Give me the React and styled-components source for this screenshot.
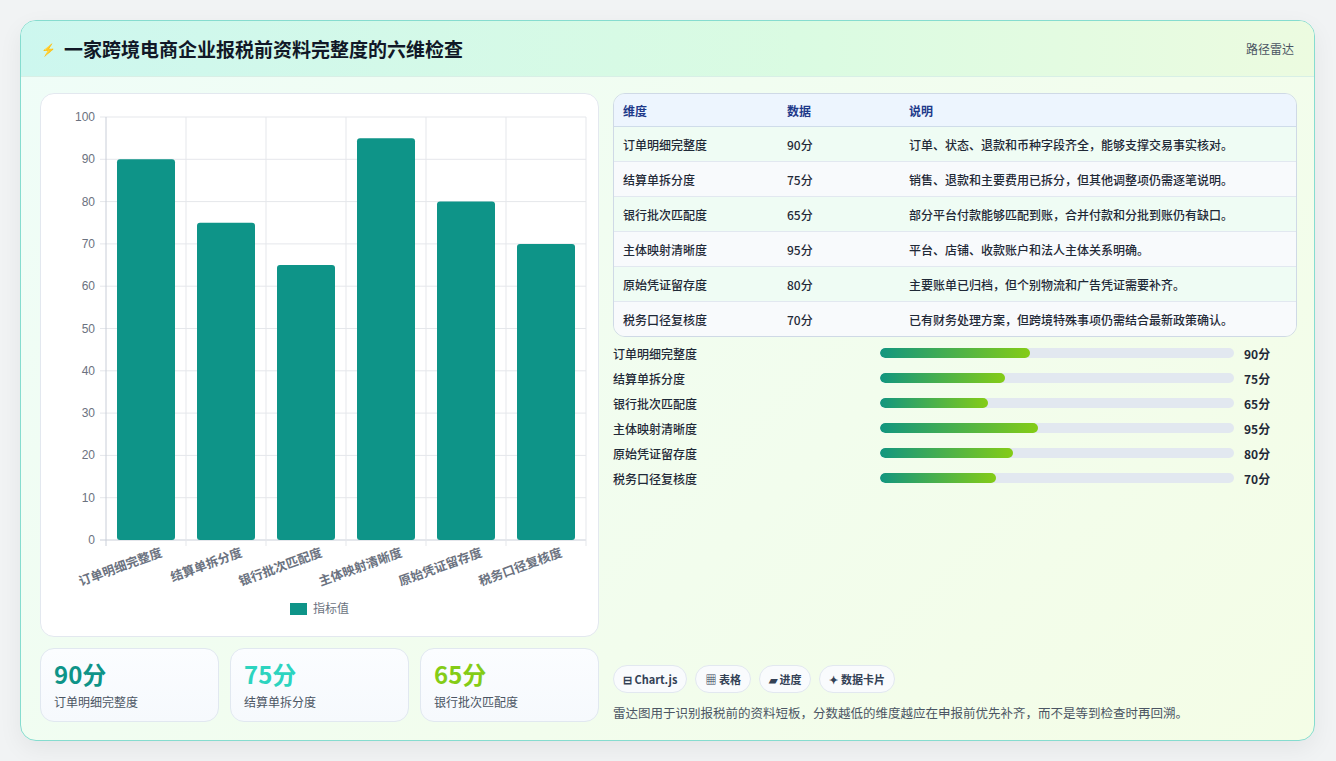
import React from "react";
import styled, { createGlobalStyle } from "styled-components";

const Global = createGlobalStyle`
  body { margin: 0; background: #f1f3f4; font-family: "Noto Sans CJK SC", "Noto Sans", sans-serif; }
`;

const Page = styled.div`
  padding: 20px 21px 20px 20px;
  height: 761px;
  box-sizing: border-box;
`;

const Shell = styled.div`
  height: 721px;
  box-sizing: border-box;
  border: 1px solid #86dccf;
  border-radius: 16px;
  overflow: hidden;
  background: linear-gradient(135deg, #effdf8 0%, #f4fde6 100%);
  box-shadow: 0 8px 24px rgba(0, 0, 0, 0.06);
  display: flex;
  flex-direction: column;
`;

const Header = styled.div`
  height: 55px;
  flex: none;
  display: flex;
  align-items: center;
  justify-content: space-between;
  padding: 0 20px;
  background: linear-gradient(90deg, #cdf7ef 0%, #dafbe2 60%, #ecfbe0 100%);
  border-bottom: 1px solid #d8efe6;
`;

const Title = styled.h1`
  margin: 0;
  font-size: 19px;
  font-weight: 700;
  color: #111827;
  display: flex;
  align-items: center;
  gap: 8px;
`;

const Bolt = styled.span`
  color: #3b82f6;
  font-size: 12px;
`;

const HeaderLink = styled.span`
  font-size: 12px;
  color: #4b5563;
`;

const Body = styled.div`
  flex: 1;
  display: grid;
  grid-template-columns: 559px 684px;
  gap: 14px;
  padding: 16px 19px 18px 19px;
`;

const Col = styled.div`
  display: flex;
  flex-direction: column;
  gap: 11px;
`;

const ChartCard = styled.div`
  background: #fff;
  border: 1px solid #e3e8ef;
  border-radius: 14px;
  height: 544px;
  box-sizing: border-box;
`;

const Stats = styled.div`
  display: grid;
  grid-template-columns: repeat(3, 1fr);
  gap: 11px;
`;

const Stat = styled.div`
  height: 74px;
  box-sizing: border-box;
  border: 1px solid #e1e8f0;
  border-radius: 14px;
  background: linear-gradient(180deg, #fbfdff, #f6f9fd);
  padding: 10px 13px;
`;

const StatValue = styled.div`
  font-size: 24px;
  font-weight: 700;
  line-height: 30px;
  color: ${(p) => p.$color};
`;

const StatLabel = styled.div`
  font-size: 12px;
  color: #4b5563;
  margin-top: 4px;
`;

const Table = styled.table`
  width: 100%;
  border-collapse: separate;
  border-spacing: 0;
  border: 1px solid #cfd9e6;
  border-radius: 12px;
  overflow: hidden;
  font-size: 12px;
`;

const Th = styled.th`
  text-align: left;
  font-weight: 600;
  color: #1e3a8a;
  background: #edf5fe;
  height: 32px;
  padding: 0 9px;
  border-bottom: 1px solid #cfdcea;
`;

const Td = styled.td`
  height: 34px;
  padding: 0 9px;
  color: #1f2937;
  font-weight: 500;
  background: ${(p) => (p.$odd ? "#f8fafc" : "#effcf4")};
  border-top: ${(p) => (p.$first ? "none" : "1px solid #e2e8f0")};
`;

const Bars = styled.div`
  display: flex;
  flex-direction: column;
  gap: 7px;
  margin-top: 7px;
`;

const BarRow = styled.div`
  display: grid;
  grid-template-columns: 257px 354px auto;
  align-items: center;
  gap: 10px;
  font-size: 12px;
  height: 18px;
`;

const BarLabel = styled.span`
  color: #1f2937;
  font-weight: 500;
`;

const Track = styled.div`
  height: 10px;
  border-radius: 5px;
  background: #e2e8f0;
  overflow: hidden;
`;

const Fill = styled.div`
  height: 100%;
  border-radius: 5px;
  background: linear-gradient(90deg, #12967f, #84cc16);
`;

const BarVal = styled.span`
  font-weight: 700;
  color: #1f2937;
`;

const Spacer = styled.div`
  flex: 1;
`;

const Chips = styled.div`
  display: flex;
  gap: 8px;
`;

const Chip = styled.span`
  height: 26px;
  padding: 0 9px;
  display: inline-flex;
  align-items: center;
  gap: 4px;
  border: 1px solid #e2e8f0;
  border-radius: 14px;
  background: #f9fbfd;
  font-size: 11px;
  font-weight: 600;
  color: #334155;
`;

const Note = styled.p`
  margin: 10px 0 0;
  font-size: 12.5px;
  color: #4b5563;
`;

const data = [
  ["订单明细完整度", 90, "订单、状态、退款和币种字段齐全，能够支撑交易事实核对。"],
  ["结算单拆分度", 75, "销售、退款和主要费用已拆分，但其他调整项仍需逐笔说明。"],
  ["银行批次匹配度", 65, "部分平台付款能够匹配到账，合并付款和分批到账仍有缺口。"],
  ["主体映射清晰度", 95, "平台、店铺、收款账户和法人主体关系明确。"],
  ["原始凭证留存度", 80, "主要账单已归档，但个别物流和广告凭证需要补齐。"],
  ["税务口径复核度", 70, "已有财务处理方案，但跨境特殊事项仍需结合最新政策确认。"],
];

function Chart() {
  const L = 65, T = 23, R = 545, B = 446;
  const step = (R - L) / 6;
  const y = (v) => B - ((B - T) * v) / 100;
  return (
    <svg width="558" height="544" style={{ display: "block" }}>
      {[0, 10, 20, 30, 40, 50, 60, 70, 80, 90, 100].map((v) => (
        <g key={v}>
          <line x1={L - 6} x2={R} y1={y(v)} y2={y(v)} stroke={v === 0 ? "#c9ced8" : "#e5e7eb"} />
          <text x={L - 11} y={y(v) + 4} textAnchor="end" fontSize="12" fill="#6b7280" fontFamily="Liberation Sans, sans-serif">{v}</text>
        </g>
      ))}
      {Array.from({ length: 7 }).map((_, i) => (
        <line key={i} x1={L + i * step} x2={L + i * step} y1={T} y2={B + 6} stroke={i === 0 ? "#c9ced8" : "#e5e7eb"} />
      ))}
      {data.map(([n, v], i) => (
        <g key={n}>
          <rect x={L + i * step + 11} y={y(v)} width={58} height={B - y(v)} rx="3" fill="#0e9488" />
          <text transform={`translate(${L + i * step + 57}, ${B + 16}) rotate(-20)`} textAnchor="end" fontSize="12.5" fontWeight="600" fill="#6b7280">{n}</text>
        </g>
      ))}
      <rect x="249" y="509" width="17" height="12" fill="#0e9488" />
      <text x="272" y="519" fontSize="12" fill="#6b7280">指标值</text>
    </svg>
  );
}

const colors = ["#0e9488", "#2dd4bf", "#84cc16"];

export default function App() {
  return (
    <Page>
      <Global />
      <Shell>
        <Header>
          <Title><Bolt>⚡</Bolt>一家跨境电商企业报税前资料完整度的六维检查</Title>
          <HeaderLink>路径雷达</HeaderLink>
        </Header>
        <Body>
          <Col>
            <ChartCard><Chart /></ChartCard>
            <Stats>
              {data.slice(0, 3).map(([n, v], i) => (
                <Stat key={n}>
                  <StatValue $color={colors[i]}>{v}分</StatValue>
                  <StatLabel>{n}</StatLabel>
                </Stat>
              ))}
            </Stats>
          </Col>
          <Col style={{ gap: 0 }}>
            <Table>
              <thead>
                <tr><Th style={{ width: 146 }}>维度</Th><Th style={{ width: 104 }}>数据</Th><Th>说明</Th></tr>
              </thead>
              <tbody>
                {data.map(([n, v, d], i) => (
                  <tr key={n}>
                    <Td $odd={i % 2 === 1} $first={i === 0}>{n}</Td>
                    <Td $odd={i % 2 === 1} $first={i === 0}>{v}分</Td>
                    <Td $odd={i % 2 === 1} $first={i === 0}>{d}</Td>
                  </tr>
                ))}
              </tbody>
            </Table>
            <Bars>
              {data.map(([n, v]) => (
                <BarRow key={n}>
                  <BarLabel>{n}</BarLabel>
                  <Track><Fill style={{ width: `${v * 0.47}%` }} /></Track>
                  <BarVal>{v}分</BarVal>
                </BarRow>
              ))}
            </Bars>
            <Spacer />
            <Chips>
              <Chip>⊟ Chart.js</Chip>
              <Chip>▦ 表格</Chip>
              <Chip>▰ 进度</Chip>
              <Chip>✦ 数据卡片</Chip>
            </Chips>
            <Note>雷达图用于识别报税前的资料短板，分数越低的维度越应在申报前优先补齐，而不是等到检查时再回溯。</Note>
          </Col>
        </Body>
      </Shell>
    </Page>
  );
}
